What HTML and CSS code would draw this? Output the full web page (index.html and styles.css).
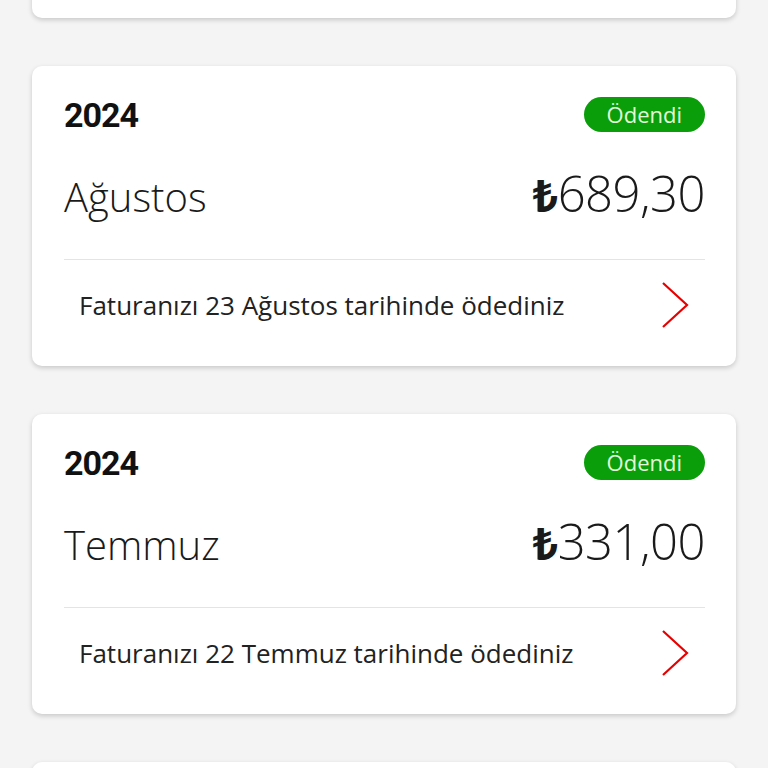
FILE: index.html
```html
<!DOCTYPE html>
<html lang="tr">
<head>
  <meta charset="UTF-8">
  <title>Faturalarım</title>
  <link rel="stylesheet" href="styles.css">
</head>
<body>
  <div class="bill-list">
    <!-- previous bill, scrolled out of view -->
    <div class="bill-card"></div>

    <div class="bill-card">
      <div class="bill-head">
        <span class="bill-year">2024</span>
        <span class="bill-status">Ödendi</span>
      </div>
      <div class="bill-main">
        <span class="bill-month">Ağustos</span>
        <span class="bill-amount"><span class="lira">₺</span>689,30</span>
      </div>
      <div class="bill-foot">
        <span class="bill-note">Faturanızı 23 Ağustos tarihinde ödediniz</span>
        <svg class="chevron" viewBox="0 0 28 46" width="28" height="46"><path d="M2 1 L26 23 L2 45"/></svg>
      </div>
    </div>

    <div class="bill-card">
      <div class="bill-head">
        <span class="bill-year">2024</span>
        <span class="bill-status">Ödendi</span>
      </div>
      <div class="bill-main">
        <span class="bill-month">Temmuz</span>
        <span class="bill-amount"><span class="lira">₺</span>331,00</span>
      </div>
      <div class="bill-foot">
        <span class="bill-note">Faturanızı 22 Temmuz tarihinde ödediniz</span>
        <svg class="chevron" viewBox="0 0 28 46" width="28" height="46"><path d="M2 1 L26 23 L2 45"/></svg>
      </div>
    </div>

    <!-- next bill, still below the fold -->
    <div class="bill-card"></div>
  </div>
</body>
</html>
```

FILE: styles.css
```css
html, body {
  height: 100%;
}

body {
  margin: 0;
  overflow: hidden;
  background-color: #f4f4f4;
  font-family: 'Open Sans', 'Noto Sans', sans-serif;
  color: #1a1a1a;
}

.bill-list {
  display: flex;
  flex-direction: column;
  gap: 48px;
  padding: 0 32px;
  margin-top: -282px; /* first card scrolled mostly out of view */
}

.bill-card {
  background-color: #fff;
  border-radius: 10px;
  box-shadow: 0 2px 5px rgba(0, 0, 0, 0.18);
  padding: 31px 31px 16px 32px;
  height: 300px;
  box-sizing: border-box;
  display: flex;
  flex-direction: column;
  flex-shrink: 0;
}

.bill-head {
  display: flex;
  justify-content: space-between;
  align-items: center;
  height: 35px;
}

.bill-year {
  font-family: Roboto, sans-serif;
  font-weight: 700;
  font-size: 34px;
  letter-spacing: -1px;
  line-height: 1;
  color: #111;
}

.bill-status {
  background-color: #0a9e0a;
  color: #e2fbd9;
  font-size: 22px;
  line-height: 35px;
  height: 35px;
  padding: 0 23px;
  border-radius: 18px;
}

.bill-main {
  display: flex;
  justify-content: space-between;
  align-items: baseline;
  padding: 31px 0 32px;
  line-height: 60px;
  border-bottom: 1px solid #e4e4e4;
}

.bill-month {
  font-size: 40px;
  font-weight: 300;
}

.bill-amount {
  font-size: 49px;
  font-weight: 300;
  letter-spacing: -0.5px;
}

.lira {
  font-family: 'Noto Sans', 'DejaVu Sans', sans-serif;
  font-weight: 700;
  font-size: 44px;
}

.bill-foot {
  display: flex;
  justify-content: space-between;
  align-items: center;
  height: 90px;
  padding: 0 16px 0 15px;
}

.bill-note {
  font-size: 26px;
  color: #222;
}

.chevron {
  fill: none;
  stroke: #e60000;
  stroke-width: 2.2;
}
```
